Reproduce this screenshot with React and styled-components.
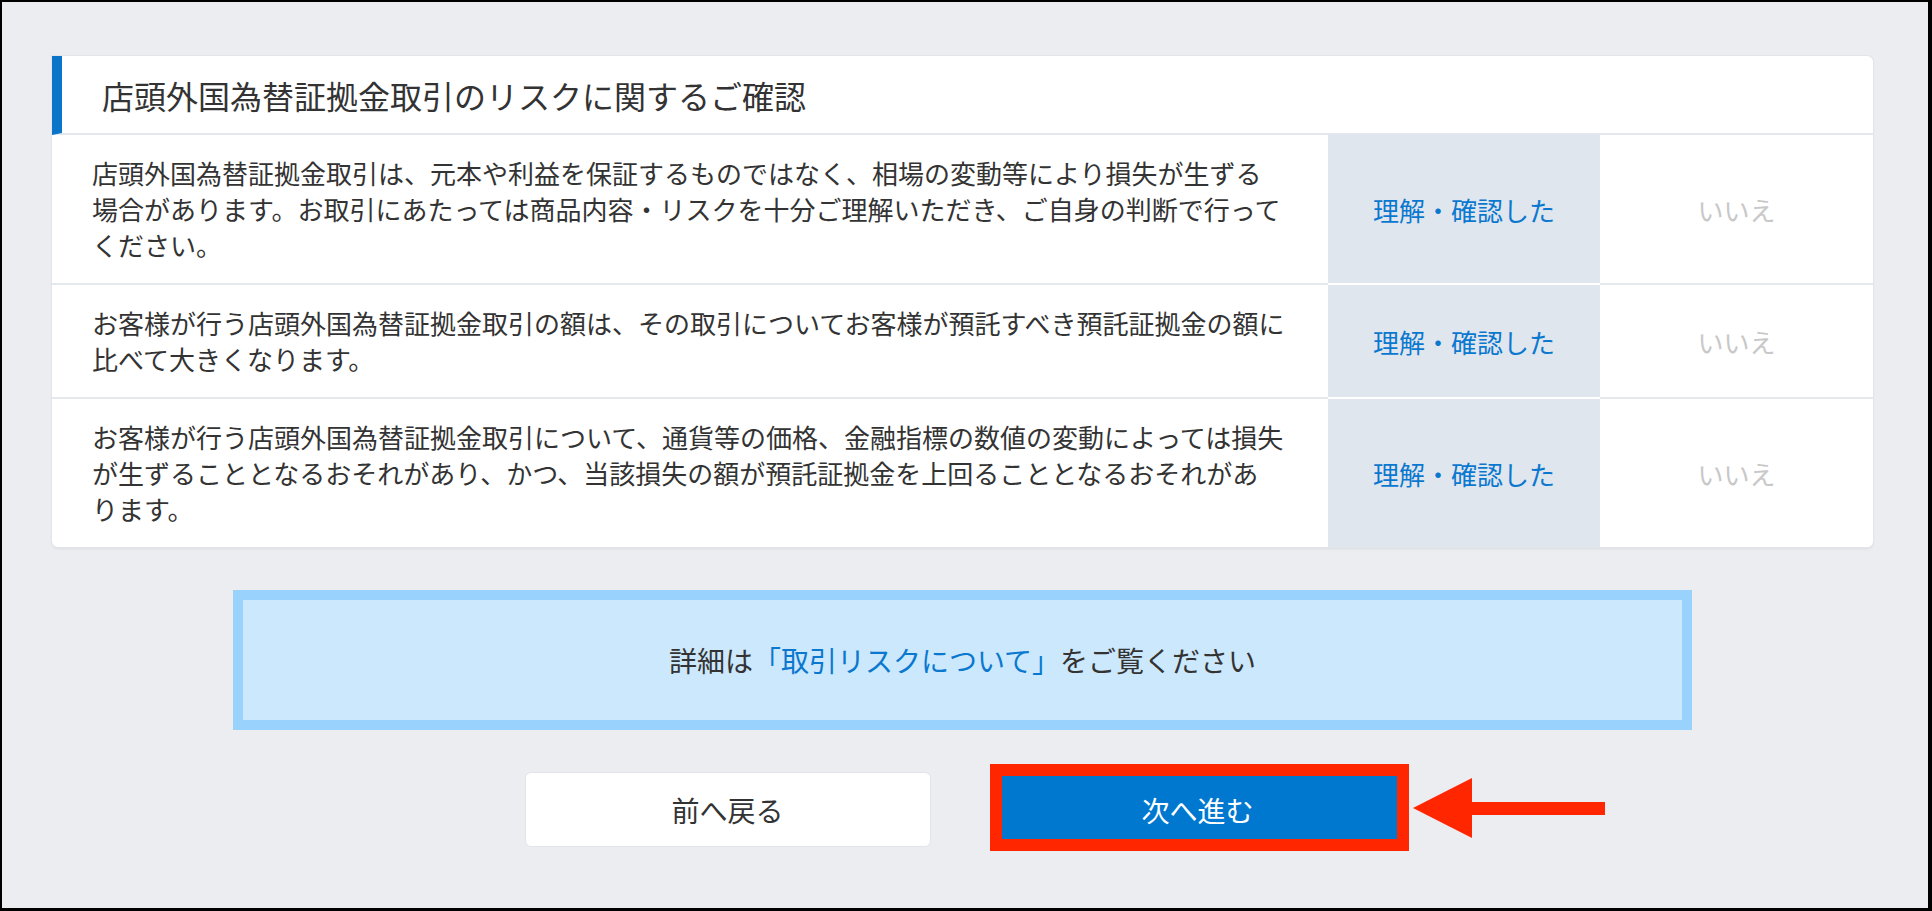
import React from 'react';
import styled, { createGlobalStyle } from 'styled-components';

const GlobalStyle = createGlobalStyle`
  html, body {
    margin: 0;
    padding: 0;
    background: #000;
  }
  body {
    font-family: "Noto Sans CJK JP", "Noto Sans", sans-serif;
    color: #333;
  }
`;

const Page = styled.div`
  box-sizing: border-box;
  height: 911px;
  border-style: solid;
  border-color: #000;
  border-width: 2px 4px 3px 2px;
  background: #ebedf0;
  padding-top: 54px;
`;

const Content = styled.main`
  width: 1821px;
  margin-left: 50px;
  display: flex;
  flex-direction: column;
  align-items: center;
`;

const Card = styled.section`
  width: 100%;
  background: #fff;
  border-radius: 0 6px 6px 6px;
  overflow: hidden;
  box-shadow: 0 0 0 1px #e2e5e9, 0 2px 3px rgba(0, 0, 0, 0.07);
`;

const CardHeader = styled.h2`
  box-sizing: border-box;
  height: 79px;
  margin: 0;
  display: flex;
  align-items: center;
  padding-left: 40px;
  border-left: 10px solid #0a74c9;
  border-bottom: 2px solid #e3e8ee;
  font-size: 32px;
  font-weight: 400;
  color: #333;
`;

const Row = styled.div`
  display: grid;
  grid-template-columns: 1fr 272px 273px;
`;

const Statement = styled.p`
  margin: 0;
  padding: 20px 30px 20px 40px;
  font-size: 26px;
  line-height: 36px;
  color: #333;
  border-bottom: ${p => (p.$last ? 'none' : '2px solid #e5e9ee')};
`;

const Choice = styled.button`
  display: flex;
  align-items: center;
  justify-content: center;
  border: none;
  margin: 0;
  padding: 0;
  font-family: inherit;
  font-size: 26px;
  cursor: pointer;
  background: ${p => (p.$selected ? '#e0e6ed' : '#fff')};
  color: ${p => (p.$selected ? '#0b78cf' : '#c8c8c8')};
  border-bottom: ${p =>
    p.$last ? 'none' : `2px solid ${p.$selected ? '#fff' : '#e5e9ee'}`};
`;

const Notice = styled.div`
  box-sizing: border-box;
  width: 1459px;
  height: 140px;
  margin-top: 43px;
  border: 10px solid #99d3fd;
  background: #cce8fc;
  display: flex;
  align-items: center;
  justify-content: center;
  font-size: 28px;
  color: #333;
`;

const Link = styled.a`
  color: #0b78cf;
  text-decoration: none;
`;

const ButtonRow = styled.div`
  display: flex;
  justify-content: center;
  gap: 64px;
  margin-top: 42px;
`;

const NavButton = styled.button`
  box-sizing: border-box;
  width: 406px;
  height: 75px;
  border-radius: 6px;
  font-family: inherit;
  font-size: 28px;
  cursor: pointer;
  border: ${p => (p.$primary ? 'none' : '1px solid #e1e4e9')};
  background: ${p => (p.$primary ? '#0078cf' : '#fff')};
  color: ${p => (p.$primary ? '#fff' : '#333')};
`;

const Highlight = styled.div`
  position: relative;
`;

const RedFrame = styled.span`
  position: absolute;
  top: -8px;
  left: -5px;
  right: -8px;
  bottom: -4px;
  border: 12px solid #ff2600;
  pointer-events: none;
`;

const Arrow = styled.svg`
  position: absolute;
  left: 417px;
  top: 5px;
`;

const rows = [
  {
    lines: [
      '店頭外国為替証拠金取引は、元本や利益を保証するものではなく、相場の変動等により損失が生ずる',
      '場合があります。お取引にあたっては商品内容・リスクを十分ご理解いただき、ご自身の判断で行って',
      'ください。',
    ],
  },
  {
    lines: [
      'お客様が行う店頭外国為替証拠金取引の額は、その取引についてお客様が預託すべき預託証拠金の額に',
      '比べて大きくなります。',
    ],
  },
  {
    lines: [
      'お客様が行う店頭外国為替証拠金取引について、通貨等の価格、金融指標の数値の変動によっては損失',
      'が生ずることとなるおそれがあり、かつ、当該損失の額が預託証拠金を上回ることとなるおそれがあ',
      'ります。',
    ],
  },
];

export default function App() {
  return (
    <>
      <GlobalStyle />
      <Page>
        <Content>
          <Card>
            <CardHeader>店頭外国為替証拠金取引のリスクに関するご確認</CardHeader>
            {rows.map((row, i) => {
              const last = i === rows.length - 1;
              return (
                <Row key={i}>
                  <Statement $last={last}>
                    {row.lines.map((line, j) => (
                      <React.Fragment key={j}>
                        {line}
                        {j < row.lines.length - 1 && <br />}
                      </React.Fragment>
                    ))}
                  </Statement>
                  <Choice $selected $last={last}>理解・確認した</Choice>
                  <Choice $last={last}>いいえ</Choice>
                </Row>
              );
            })}
          </Card>

          <Notice>
            詳細は<Link href="#">「取引リスクについて」</Link>をご覧ください
          </Notice>

          <ButtonRow>
            <NavButton>前へ戻る</NavButton>
            <Highlight>
              <NavButton $primary>次へ進む</NavButton>
              <RedFrame />
              <Arrow width="194" height="62" viewBox="0 0 194 62">
                <polygon points="1,31 60,1 60,61" fill="#ff2600" />
                <rect x="59" y="25" width="134" height="13" fill="#ff2600" />
              </Arrow>
            </Highlight>
          </ButtonRow>
        </Content>
      </Page>
    </>
  );
}
